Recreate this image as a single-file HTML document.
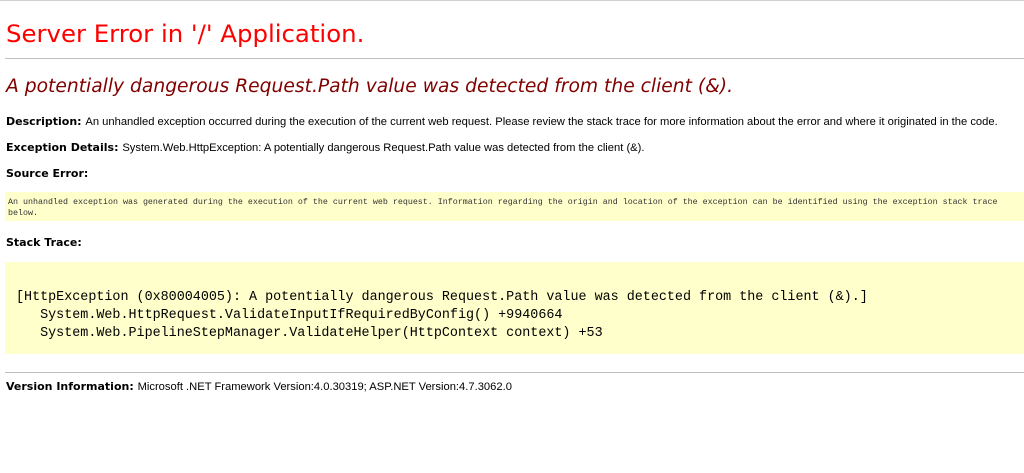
<!DOCTYPE html>
<html><head><meta charset="utf-8"><style>
body{margin:0;background:#fff;width:1024px;height:473px;overflow:hidden;position:relative;font-family:"Liberation Sans",Arial,sans-serif;}
.a{position:absolute;white-space:nowrap;}
.t{left:6px;top:19px;font-family:"DejaVu Sans",Verdana,sans-serif;font-size:24.4px;color:#f00;}
.h2{left:6px;top:76px;font-family:"DejaVu Sans",Verdana,sans-serif;font-style:italic;font-size:18.7px;color:#800000;}
.p{left:6px;font-size:11.2px;color:#000;}
.p b{font-family:"DejaVu Sans",Verdana,sans-serif;font-size:11px;}
.hr{position:absolute;left:5px;right:0;height:1px;background:#c0c0c0;}
.box{position:absolute;left:5px;right:0;background:#ffffcc;}
.mono{font-family:"Liberation Mono","DejaVu Sans Mono",monospace;}
</style></head><body>
<div class="hr" style="top:0;left:0;background:#d0d0d0"></div>
<div class="a t">Server Error in '/' Application.</div>
<div class="hr" style="top:58px"></div>
<div class="a h2">A potentially dangerous Request.Path value was detected from the client (&amp;).</div>
<div class="a p" style="top:115px"><b>Description: </b>An unhandled exception occurred during the execution of the current web request. Please review the stack trace for more information about the error and where it originated in the code.</div>
<div class="a p" style="top:141px"><b>Exception Details: </b>System.Web.HttpException: A potentially dangerous Request.Path value was detected from the client (&amp;).</div>
<div class="a p" style="top:167px"><b>Source Error:</b></div>
<div class="box" style="top:192px;height:29px"></div>
<div class="a mono" style="left:8px;top:197px;font-size:8.33px;line-height:11px;color:#333;">An unhandled exception was generated during the execution of the current web request. Information regarding the origin and location of the exception can be identified using the exception stack trace<br>below.</div>
<div class="a p" style="top:236px"><b>Stack Trace:</b></div>
<div class="box" style="top:262px;height:92px"></div>
<div class="a mono" style="left:16px;top:289px;font-size:13.4px;line-height:18px;color:#000;">[HttpException (0x80004005): A potentially dangerous Request.Path value was detected from the client (&amp;).]<br>&nbsp;&nbsp;&nbsp;System.Web.HttpRequest.ValidateInputIfRequiredByConfig() +9940664<br>&nbsp;&nbsp;&nbsp;System.Web.PipelineStepManager.ValidateHelper(HttpContext context) +53</div>
<div class="hr" style="top:372px"></div>
<div class="a p" style="top:380px"><b>Version Information: </b>Microsoft .NET Framework Version:4.0.30319; ASP.NET Version:4.7.3062.0</div>
</body></html>
